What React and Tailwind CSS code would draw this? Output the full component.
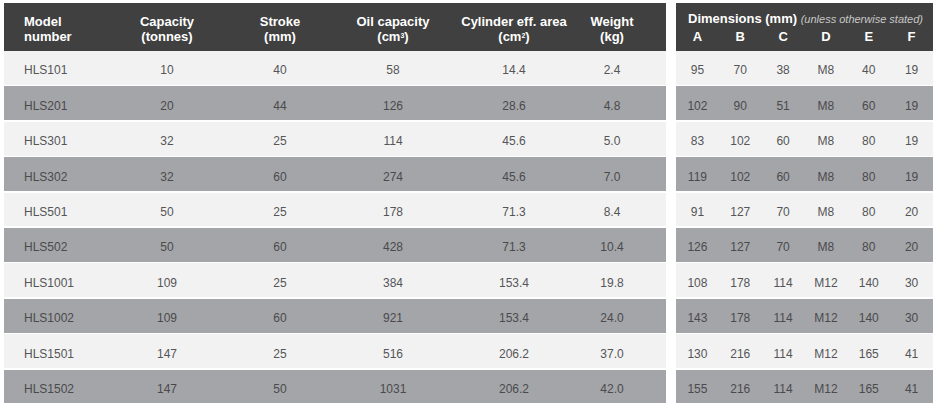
import React from 'react';

const rows = [
  ['HLS101', '10', '40', '58', '14.4', '2.4', ['95', '70', '38', 'M8', '40', '19']],
  ['HLS201', '20', '44', '126', '28.6', '4.8', ['102', '90', '51', 'M8', '60', '19']],
  ['HLS301', '32', '25', '114', '45.6', '5.0', ['83', '102', '60', 'M8', '80', '19']],
  ['HLS302', '32', '60', '274', '45.6', '7.0', ['119', '102', '60', 'M8', '80', '19']],
  ['HLS501', '50', '25', '178', '71.3', '8.4', ['91', '127', '70', 'M8', '80', '20']],
  ['HLS502', '50', '60', '428', '71.3', '10.4', ['126', '127', '70', 'M8', '80', '20']],
  ['HLS1001', '109', '25', '384', '153.4', '19.8', ['108', '178', '114', 'M12', '140', '30']],
  ['HLS1002', '109', '60', '921', '153.4', '24.0', ['143', '178', '114', 'M12', '140', '30']],
  ['HLS1501', '147', '25', '516', '206.2', '37.0', ['130', '216', '114', 'M12', '165', '41']],
  ['HLS1502', '147', '50', '1031', '206.2', '42.0', ['155', '216', '114', 'M12', '165', '41']],
];

const leftCols = 'grid grid-cols-[106px_114px_112px_114px_128px_68px] pr-[20px]';
const rowBg = (i) => (i % 2 === 0 ? 'bg-[#f2f2f2] text-[#555558]' : 'bg-[#a4a5a8] text-[#4a4a4d]');

const App = () => {
  return (
    <div className="w-[940px] h-[407px] bg-white flex gap-[10px] pt-[3px] pl-[4px] font-['Liberation_Sans',Arial,sans-serif] text-[12px]">
      {/* main specs table */}
      <div className="w-[662px] flex flex-col">
        <div className={`${leftCols} h-[48px] bg-[#404040] text-white font-bold text-[13px] leading-[15px] items-center`}>
          <div className="pl-[20px] pt-[4px]">Model<br />number</div>
          <div className="text-center pt-[4px]">Capacity<br />(tonnes)</div>
          <div className="text-center pt-[4px]">Stroke<br />(mm)</div>
          <div className="text-center pt-[4px]">Oil capacity<br />(cm<sup className="text-[7px]">3</sup>)</div>
          <div className="text-center pt-[4px]">Cylinder eff. area<br />(cm<sup className="text-[7px]">2</sup>)</div>
          <div className="text-center pt-[4px]">Weight<br />(kg)</div>
        </div>
        <div className="flex flex-col gap-[1.6px]">
          {rows.map((r, i) => (
            <div key={r[0]} className={`${leftCols} ${rowBg(i)} h-[33.8px] items-center pt-[5px]`}>
              <div className="pl-[20px]">{r[0]}</div>
              <div className="text-center">{r[1]}</div>
              <div className="text-center">{r[2]}</div>
              <div className="text-center">{r[3]}</div>
              <div className="text-center">{r[4]}</div>
              <div className="text-center">{r[5]}</div>
            </div>
          ))}
        </div>
      </div>

      {/* dimensions table */}
      <div className="w-[257px] flex flex-col">
        <div className="h-[48px] bg-[#404040] text-white font-bold text-[13px] leading-[15px] pt-[8px]">
          <div className="pl-[12px] whitespace-nowrap">
            Dimensions (mm) <span className="font-normal italic text-[11px] text-[#c8c8c8]">(unless otherwise stated)</span>
          </div>
          <div className="grid grid-cols-6 text-center pt-[2px]">
            {['A', 'B', 'C', 'D', 'E', 'F'].map((l) => (
              <div key={l}>{l}</div>
            ))}
          </div>
        </div>
        <div className="flex flex-col gap-[1.6px]">
          {rows.map((r, i) => (
            <div key={r[0]} className={`grid grid-cols-6 ${rowBg(i)} h-[33.8px] items-center text-center pt-[5px]`}>
              {r[6].map((v, j) => (
                <div key={j}>{v}</div>
              ))}
            </div>
          ))}
        </div>
      </div>
    </div>
  );
};

export default App;
